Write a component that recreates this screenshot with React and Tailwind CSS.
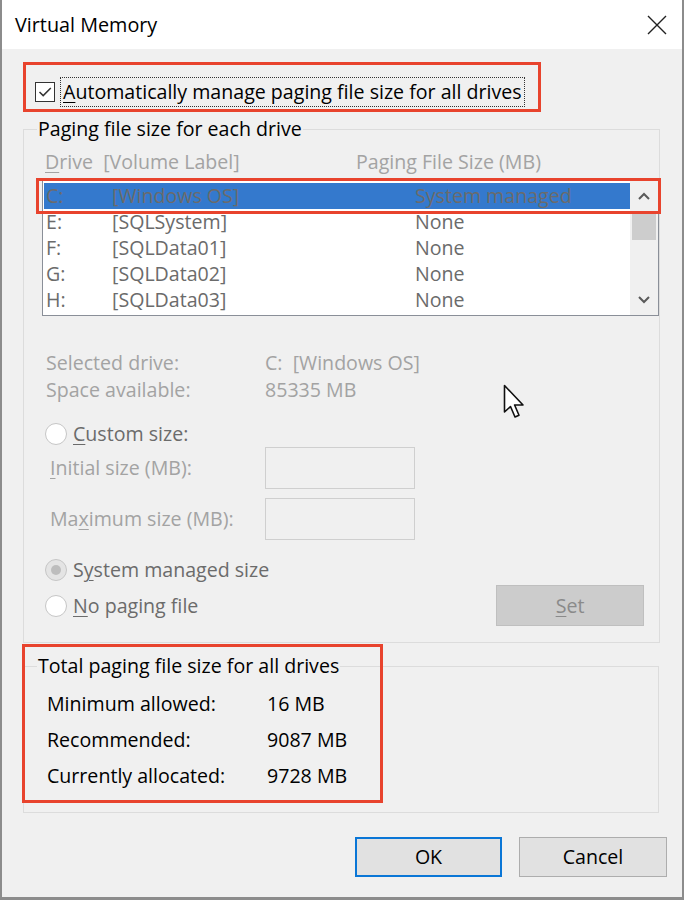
import React from "react";

function U({ children }) {
  return <span className="underline decoration-1 underline-offset-[3px]">{children}</span>;
}

function Radio({ checked }) {
  return (
    <div
      className={
        "w-[22px] h-[22px] rounded-full border border-[#c6c6c6] flex items-center justify-center shrink-0 " +
        (checked ? "bg-[#e4e4e4]" : "bg-white")
      }
    >
      {checked && <div className="w-[10px] h-[10px] rounded-full bg-[#bdbdbd]" />}
    </div>
  );
}

const rows = [
  ["C:", "[Windows OS]", "System managed", true],
  ["E:", "[SQLSystem]", "None", false],
  ["F:", "[SQLData01]", "None", false],
  ["G:", "[SQLData02]", "None", false],
  ["H:", "[SQLData03]", "None", false],
];

export default function App() {
  return (
    <div className="relative w-[684px] h-[900px] flex flex-col border-l-2 border-r-2 border-b-[3px] border-[#8c8c8c] bg-[#f0f0f0] font-['Open_Sans','Noto_Sans',sans-serif] text-[19.6px] text-[#1a1a1a]">
      {/* title bar */}
      <div className="h-[49px] bg-white flex items-center justify-between pl-[13px] pr-[15px] shrink-0">
        <span className="text-[19.8px] text-black">Virtual Memory</span>
        <svg width="20" height="20" viewBox="0 0 20 20">
          <path d="M1 1 L19 19 M19 1 L1 19" stroke="#222" strokeWidth="1.4" fill="none" />
        </svg>
      </div>

      <div className="flex-1 flex flex-col pl-[21px]">
        {/* checkbox (red box 1) */}
        <div className="mt-[13px] w-[518px] h-[50px] border-[3px] border-[#e8432d] pl-[9px] pt-[12px]">
          <div className="flex items-center h-[30px]">
            <div className="w-[20px] h-[20px] border border-[#333] bg-white flex items-center justify-center shrink-0">
              <svg width="16" height="16" viewBox="0 0 16 16">
                <path d="M2.5 8 L6.2 11.6 L13.8 4" stroke="#333" strokeWidth="1.5" fill="none" />
              </svg>
            </div>
            <span className="ml-[5px] h-[30px] leading-[28px] border border-dotted border-[#333] px-[2px] text-black whitespace-nowrap">
              <U>A</U>utomatically manage paging file size for all drives
            </span>
          </div>
        </div>

        {/* group 1 */}
        <fieldset className="mt-[4px] w-[636px] h-[527px] border border-[#dcdcdc]">
          <legend className="ml-[13px] px-[1px] leading-[26px] text-black">Paging file size for each drive</legend>

          <div className="mt-[7px] h-[26px] leading-[26px] flex pl-[21px] text-[#a3a3a3] whitespace-nowrap">
            <span className="w-[311px]">
              <U>D</U>rive&nbsp; [Volume Label]
            </span>
            <span>Paging File Size (MB)</span>
          </div>

          {/* list */}
          <div className="relative mt-[5px] ml-[18px] w-[617px] h-[136px] border border-[#8a8f98] bg-white flex">
            <div className="flex-1 pt-[2px] pl-[1px]">
              {rows.map(([d, l, s, sel]) => (
                <div
                  key={d}
                  className={
                    "h-[26px] leading-[26px] flex text-[#6b6b6b] whitespace-nowrap " +
                    (sel ? "bg-[#3479cd]" : "")
                  }
                >
                  <span className="w-[68px] pl-[2px]">{d}</span>
                  <span className="w-[303px]">{l}</span>
                  <span>{s}</span>
                </div>
              ))}
            </div>
            <div className="w-[28px] bg-[#f0f0f0] flex flex-col items-center">
              <div className="h-[30px] flex items-center justify-center">
                <svg width="14" height="10" viewBox="0 0 14 10">
                  <path d="M2 8 L7 3 L12 8" stroke="#5a5a5a" strokeWidth="2" fill="none" />
                </svg>
              </div>
              <div className="w-[24px] h-[29px] bg-[#cdcdcd]" />
              <div className="flex-1" />
              <div className="h-[30px] flex items-center justify-center">
                <svg width="14" height="10" viewBox="0 0 14 10">
                  <path d="M2 2 L7 7 L12 2" stroke="#5a5a5a" strokeWidth="2" fill="none" />
                </svg>
              </div>
            </div>
            <div className="absolute left-[-7px] top-[-3px] w-[625px] h-[36px] border-[3px] border-[#e8432d]" />
          </div>

          {/* selected drive info */}
          <div className="mt-[33px] ml-[22px] text-[#a3a3a3] whitespace-nowrap">
            <div className="h-[27px] leading-[27px] flex">
              <span className="w-[219px]">Selected drive:</span>
              <span>C:&nbsp; [Windows OS]</span>
            </div>
            <div className="h-[27px] leading-[27px] flex">
              <span className="w-[219px]">Space available:</span>
              <span>85335 MB</span>
            </div>
          </div>

          {/* custom size */}
          <div className="mt-[18px] ml-[21px] h-[26px] flex items-center text-[#6b6b6b]">
            <Radio />
            <span className="ml-[6px]">
              <U>C</U>ustom size:
            </span>
          </div>
          <div className="ml-[26px] h-[42px] flex items-center text-[#a3a3a3]">
            <span className="w-[215px]">
              <U>I</U>nitial size (MB):
            </span>
            <div className="w-[150px] h-[42px] border border-[#cfcfcf]" />
          </div>
          <div className="mt-[9px] ml-[26px] h-[42px] flex items-center text-[#a3a3a3]">
            <span className="w-[215px]">
              Ma<U>x</U>imum size (MB):
            </span>
            <div className="w-[150px] h-[42px] border border-[#cfcfcf]" />
          </div>

          <div className="mt-[17px] ml-[21px] h-[26px] flex items-center text-[#6b6b6b]">
            <Radio checked />
            <span className="ml-[6px]">
              S<U>y</U>stem managed size
            </span>
          </div>
          <div className="mt-[2px] ml-[21px] mr-[15px] h-[41px] flex items-center text-[#6b6b6b]">
            <Radio />
            <span className="ml-[6px]">
              <U>N</U>o paging file
            </span>
            <div className="ml-auto w-[148px] h-[41px] bg-[#cccccc] border border-[#bfbfbf] flex items-center justify-center text-[#8a8a8a]">
              <span>
                <U>S</U>et
              </span>
            </div>
          </div>
        </fieldset>

        {/* group 2 */}
        <div className="relative mt-[10px] w-[636px]">
          <fieldset className="w-[636px] h-[160px] border border-[#dcdcdc]">
            <legend className="ml-[13px] px-[1px] leading-[26px] text-black">
              Total paging file size for all drives
            </legend>
            <div className="mt-[7px] ml-[23px] text-black whitespace-nowrap">
              <div className="h-[36px] leading-[36px] flex">
                <span className="w-[220px]">Minimum allowed:</span>
                <span>16 MB</span>
              </div>
              <div className="h-[36px] leading-[36px] flex">
                <span className="w-[220px]">Recommended:</span>
                <span>9087 MB</span>
              </div>
              <div className="h-[36px] leading-[36px] flex">
                <span className="w-[220px]">Currently allocated:</span>
                <span>9728 MB</span>
              </div>
            </div>
          </fieldset>
          <div className="absolute left-[-1px] top-[-9px] w-[361px] h-[159px] border-[3px] border-[#e8432d]" />
        </div>

        {/* buttons */}
        <div className="mt-[24px] mr-[15px] flex justify-end gap-[17px]">
          <div className="w-[147px] h-[40px] border-2 border-[#0a76d6] bg-[#e1e1e1] flex items-center justify-center text-black">
            OK
          </div>
          <div className="w-[148px] h-[40px] border border-[#adadad] bg-[#e1e1e1] flex items-center justify-center text-black">
            Cancel
          </div>
        </div>
      </div>

      {/* mouse cursor */}
      <svg
        className="absolute left-[501px] top-[384px]"
        width="24"
        height="38"
        viewBox="0 0 24 38"
      >
        <path
          d="M1.5 1.5 L1.5 28 L7.5 22.5 L12 33 L16 31.2 L11.6 21 L20 21 Z"
          fill="white"
          stroke="#111"
          strokeWidth="1.6"
          strokeLinejoin="round"
        />
      </svg>
    </div>
  );
}
